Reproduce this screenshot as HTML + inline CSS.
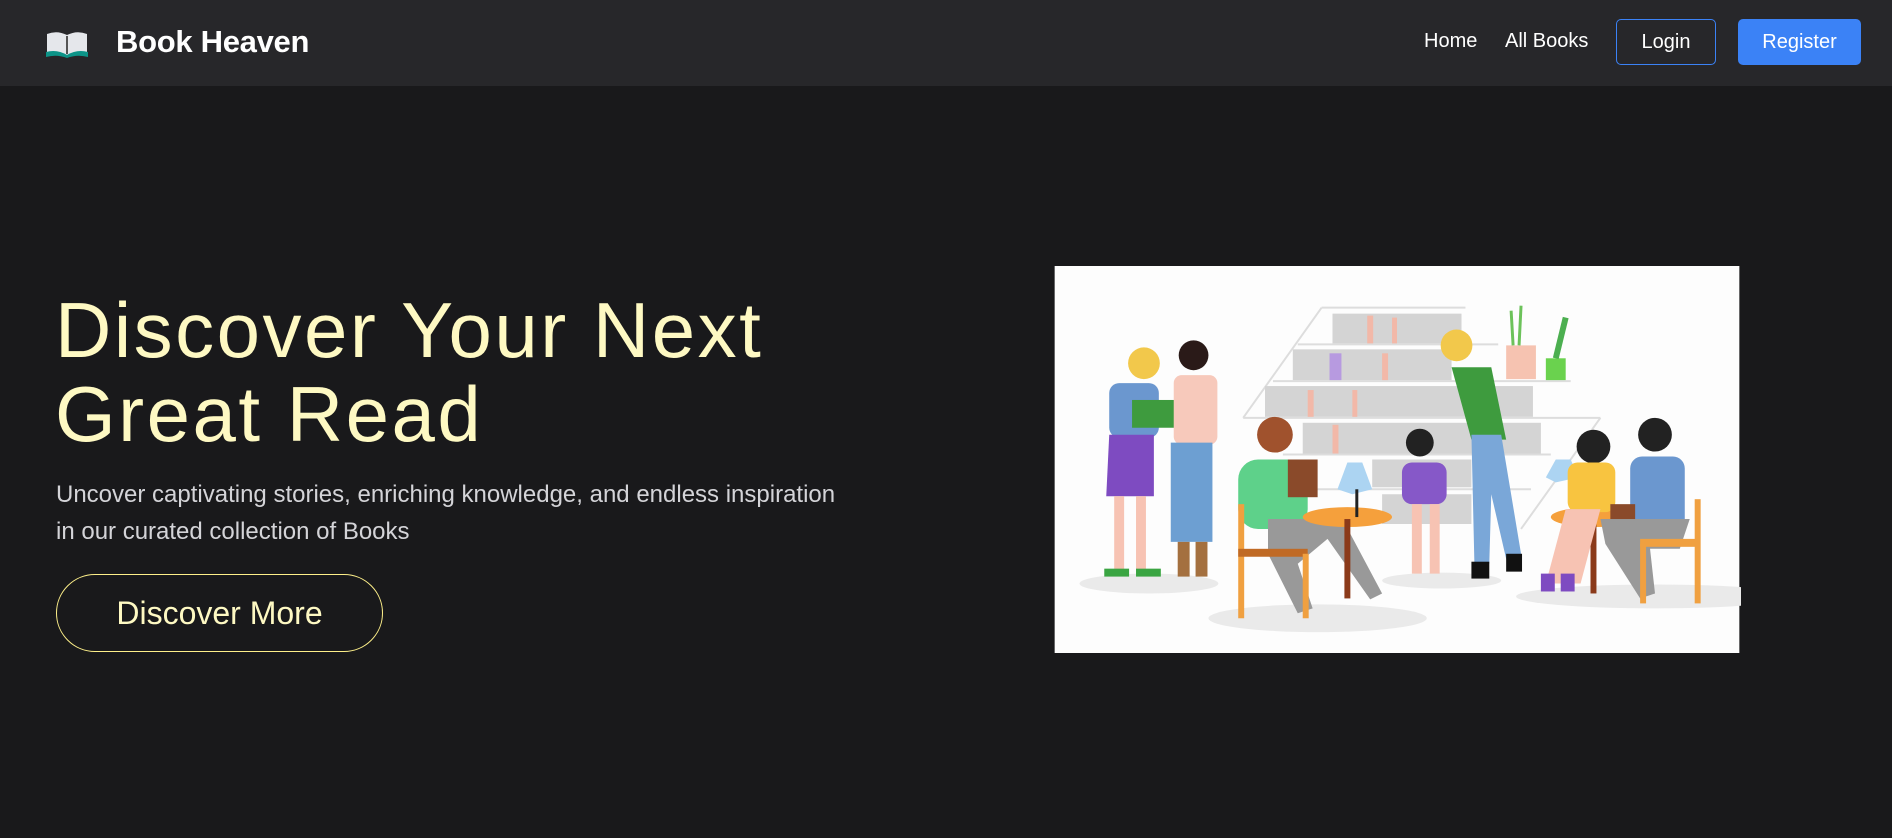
<!DOCTYPE html>
<html><head><meta charset="utf-8"><style>
*{margin:0;padding:0;box-sizing:border-box}
body{width:1892px;height:838px;background:#19191b;font-family:"Liberation Sans",sans-serif;overflow:hidden;position:relative}
nav{position:absolute;left:0;top:0;width:1892px;height:86px;background:#27272a}
.brand{position:absolute;left:116px;top:24px;color:#fff;font-size:31px;font-weight:bold;letter-spacing:-0.3px}
.lnk{position:absolute;top:30px;color:#fff;font-size:20px}
.login{position:absolute;left:1616px;top:19px;width:100px;height:46px;border:1px solid #3b82f6;border-radius:5px;color:#fff;font-size:20px;text-align:center;line-height:44px}
.reg{position:absolute;left:1738px;top:19px;width:123px;height:46px;background:#3b82f6;border-radius:5px;color:#fff;font-size:20px;text-align:center;line-height:46px}
h1{position:absolute;left:55px;top:288px;color:#fef9c3;font-size:78px;font-weight:normal;line-height:84px;letter-spacing:2.5px}
p{position:absolute;left:56px;top:476px;color:#d4d4d8;font-size:24px;line-height:37px;width:890px}
.btn{position:absolute;left:56px;top:574px;width:327px;height:78px;border:1px solid #fef08a;border-radius:40px;color:#fef9c3;font-size:32px;text-align:center;line-height:76px}
svg.art{position:absolute;left:1053px;top:266px}
</style></head><body>
<nav>
<svg style="position:absolute;left:45px;top:30px" width="44" height="28" viewBox="0 0 44 28"><path d="M2 4 Q12 0 22 5 Q32 0 42 4 L42 24 Q32 20 22 25 Q12 20 2 24Z" fill="#e5e7eb"/><path d="M1 22 Q12 19 22 25 Q32 19 43 22 L43 27 Q32 24 22 28 Q12 24 1 27Z" fill="#0d9488"/><line x1="22" y1="6" x2="22" y2="24" stroke="#555" stroke-width="2"/></svg>
<div class="brand">Book Heaven</div>
<div class="lnk" style="left:1424px">Home</div>
<div class="lnk" style="left:1505px">All Books</div>
<div class="login">Login</div>
<div class="reg">Register</div>
</nav>
<h1>Discover Your Next<br>Great Read</h1>
<p>Uncover captivating stories, enriching knowledge, and endless inspiration<br>in our curated collection of Books</p>
<div class="btn">Discover More</div>
<svg class="art" width="688" height="387" viewBox="0 0 690 390">
<rect width="690" height="390" fill="#fdfdfd"/>
<g stroke="#ddd" stroke-width="2" fill="none">
<path d="M269 42 L414 42 M245 79 L447 79 M220 116 L520 116 M190 153 L550 153 M230 190 L500 190 M260 225 L480 225 M269 42 L190 153 M550 153 L470 265"/>
</g>
<g fill="#d4d4d4">
<rect x="280" y="48" width="130" height="30"/><rect x="240" y="84" width="160" height="31"/><rect x="212" y="121" width="270" height="31"/><rect x="250" y="158" width="240" height="31"/><rect x="320" y="195" width="100" height="28"/><rect x="330" y="230" width="90" height="30"/>
</g>
<g fill="#f2b8a8"><rect x="315" y="50" width="6" height="28"/><rect x="340" y="52" width="5" height="26"/><rect x="330" y="88" width="6" height="27"/><rect x="255" y="125" width="6" height="27"/><rect x="300" y="125" width="5" height="27"/><rect x="280" y="160" width="6" height="29"/></g>
<rect x="277" y="88" width="12" height="27" fill="#b79ae0"/>
<rect x="455" y="80" width="30" height="34" fill="#f6c3b1"/><path d="M462 80 L460 45 M468 80 L470 40" stroke="#6cc25a" stroke-width="3"/>
<rect x="495" y="93" width="20" height="22" fill="#6ad24e"/><path d="M505 93 L515 52" stroke="#4caf50" stroke-width="6"/>
<g fill="#eaeaea"><ellipse cx="95" cy="320" rx="70" ry="10"/><ellipse cx="265" cy="355" rx="110" ry="14"/><ellipse cx="605" cy="333" rx="140" ry="12"/><ellipse cx="390" cy="317" rx="60" ry="8"/></g>
<circle cx="90" cy="98" r="16" fill="#f2c84b"/><rect x="55" y="118" width="50" height="55" rx="10" fill="#6b97cf"/><path d="M55 170 L100 170 L100 232 L52 232Z" fill="#7e4bc1"/><rect x="60" y="232" width="10" height="80" fill="#f7c3b3"/><rect x="82" y="232" width="10" height="80" fill="#f7c3b3"/><rect x="78" y="135" width="48" height="28" fill="#3e9b3e"/><rect x="50" y="305" width="25" height="8" fill="#3aa542"/><rect x="82" y="305" width="25" height="8" fill="#3aa542"/>
<circle cx="140" cy="90" r="15" fill="#2a1a18"/><rect x="120" y="110" width="44" height="70" rx="8" fill="#f7c9bb"/><rect x="117" y="178" width="42" height="100" fill="#6d9fd2"/><rect x="124" y="278" width="12" height="35" fill="#a4703f"/><rect x="142" y="278" width="12" height="35" fill="#a4703f"/>
<circle cx="222" cy="170" r="18" fill="#a0522d"/><rect x="185" y="195" width="70" height="70" rx="20" fill="#5ed18a"/><rect x="235" y="195" width="30" height="38" fill="#8a4a2a"/><path d="M215 255 L290 255 L330 330 L318 336 L275 275 L245 300 L260 345 L245 350 L215 290Z" fill="#999"/>
<rect x="185" y="240" width="6" height="115" fill="#f0a040"/><rect x="185" y="285" width="70" height="8" fill="#c06a25"/><rect x="250" y="290" width="6" height="65" fill="#f0a040"/>
<ellipse cx="295" cy="253" rx="45" ry="10" fill="#f5a03c"/><rect x="292" y="255" width="6" height="80" fill="#8b3a1a"/><path d="M300 230 L285 225 L295 198 L310 198 L320 225Z" fill="#acd4f2"/><rect x="303" y="225" width="3" height="28" fill="#222"/>
<circle cx="368" cy="178" r="14" fill="#222"/><rect x="350" y="198" width="45" height="42" rx="10" fill="#8658c8"/><rect x="360" y="240" width="10" height="70" fill="#f7c3b3"/><rect x="378" y="240" width="10" height="70" fill="#f7c3b3"/>
<circle cx="405" cy="80" r="16" fill="#f2c84b"/><path d="M400 102 L440 102 L455 175 L420 175Z" fill="#3e9b3e"/><path d="M420 170 L450 170 L470 290 L455 295 L440 230 L438 300 L423 300Z" fill="#7aa7d8"/><rect x="420" y="298" width="18" height="17" fill="#111"/><rect x="455" y="290" width="16" height="18" fill="#111"/>
<ellipse cx="545" cy="253" rx="45" ry="10" fill="#f5a03c"/><rect x="540" y="255" width="6" height="75" fill="#8b3a1a"/><path d="M505 218 L495 213 L505 195 L520 195 L528 213Z" fill="#acd4f2"/>
<circle cx="543" cy="182" r="17" fill="#222"/><rect x="517" y="198" width="48" height="50" rx="10" fill="#f8c440"/><path d="M515 245 L550 245 L530 320 L495 320Z" fill="#f7c3b3"/><rect x="490" y="310" width="14" height="18" fill="#7e4bc1"/><rect x="510" y="310" width="14" height="18" fill="#7e4bc1"/>
<circle cx="605" cy="170" r="17" fill="#222"/><rect x="580" y="192" width="55" height="75" rx="12" fill="#6b97cf"/><path d="M550 255 L640 255 L630 285 L600 285 L605 330 L590 335 L555 280Z" fill="#999"/><rect x="560" y="240" width="25" height="15" fill="#8a4a2a"/>
<rect x="590" y="275" width="60" height="8" fill="#f0a040"/><rect x="645" y="235" width="6" height="105" fill="#f0a040"/><rect x="590" y="280" width="6" height="60" fill="#f0a040"/>
</svg>
</body></html>
